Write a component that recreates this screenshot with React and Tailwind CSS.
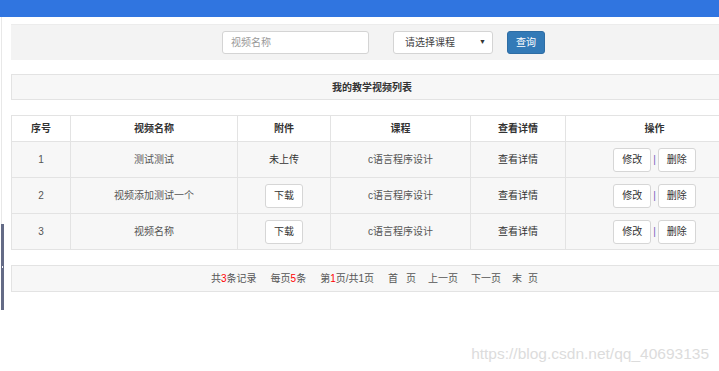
import React from "react";

const rows = [
    { id: 1, name: "测试测试", file: null, course: "c语言程序设计" },
    { id: 2, name: "视频添加测试一个", file: "下载", course: "c语言程序设计" },
    { id: 3, name: "视频名称", file: "下载", course: "c语言程序设计" },
];

const SmallButton = ({ children }) => (
    <button className="w-[38px] h-[24px] bg-white border border-[#d6d6d6] rounded-[3px] text-[10px] text-[#333] leading-none">
        {children}
    </button>
);

const App = () => {
    return (
        <div
            className="relative w-full h-[371px] overflow-hidden bg-white text-[10px] text-[#555]"
            style={{ fontFamily: '"Liberation Sans", "Noto Sans CJK SC", sans-serif' }}
        >
            <div className="h-[17px] bg-[#3075e0]" />
            <div className="flex">
                {/* left collapsed sidebar edge */}
                <div className="w-[4px] flex flex-col shrink-0">
                    <div className="h-[207px] ml-[1px] w-[1px] bg-[#e8e8e8]" />
                    <div className="h-[86px] ml-[1px] w-[3px] bg-[#646b86] flex items-center justify-center">
                        <div className="w-[1px] h-[2px] bg-white" />
                    </div>
                </div>

                <div className="ml-[7px] shrink-0">
                    {/* search bar */}
                    <div className="mt-[7px] w-[722px] h-[36px] bg-[#f3f3f3] border-t border-[#ececec] flex items-center pl-[211px]">
                        <div className="w-[147px] h-[23px] bg-white border border-[#d4d4d4] rounded-[3px] flex items-center px-[8px] text-[#999]">
                            视频名称
                        </div>
                        <div className="ml-[24px] w-[100px] h-[23px] bg-white border border-[#d4d4d4] rounded-[3px] flex items-center justify-between pl-[11px] pr-[6px] text-[#444]">
                            <span>请选择课程</span>
                            <span className="text-[7px] text-[#333]">▼</span>
                        </div>
                        <button className="ml-[14px] w-[38px] h-[23px] bg-[#337ab7] border border-[#2e6da4] rounded-[3px] text-white text-[10px] leading-none">
                            查询
                        </button>
                    </div>

                    {/* title */}
                    <div className="mt-[14px] w-[722px] h-[26px] bg-[#f7f7f7] border border-[#e3e3e3] flex items-center justify-center font-bold text-[#333]">
                        我的教学视频列表
                    </div>

                    {/* table */}
                    <table className="mt-[15px] table-fixed border-collapse w-[732px] text-center">
                        <colgroup>
                            <col className="w-[59px]" />
                            <col className="w-[167px]" />
                            <col className="w-[93px]" />
                            <col className="w-[140px]" />
                            <col className="w-[95px]" />
                            <col className="w-[178px]" />
                        </colgroup>
                        <thead>
                            <tr className="h-[26px] bg-white font-bold text-[#333]">
                                <th className="border border-[#e3e3e3]">序号</th>
                                <th className="border border-[#e3e3e3]">视频名称</th>
                                <th className="border border-[#e3e3e3]">附件</th>
                                <th className="border border-[#e3e3e3]">课程</th>
                                <th className="border border-[#e3e3e3]">查看详情</th>
                                <th className="border border-[#e3e3e3]">操作</th>
                            </tr>
                        </thead>
                        <tbody>
                            {rows.map((row) => (
                                <tr key={row.id} className="h-[36px] bg-[#f7f7f7]">
                                    <td className="border border-[#e3e3e3]">{row.id}</td>
                                    <td className="border border-[#e3e3e3]">{row.name}</td>
                                    <td className="border border-[#e3e3e3] text-[#333]">
                                        {row.file ? <SmallButton>{row.file}</SmallButton> : "未上传"}
                                    </td>
                                    <td className="border border-[#e3e3e3]">{row.course}</td>
                                    <td className="border border-[#e3e3e3] text-[#333]">查看详情</td>
                                    <td className="border border-[#e3e3e3]">
                                        <div className="flex items-center justify-center">
                                            <SmallButton>修改</SmallButton>
                                            <span className="mx-[2px] text-[#7a5fc0]">|</span>
                                            <SmallButton>删除</SmallButton>
                                        </div>
                                    </td>
                                </tr>
                            ))}
                        </tbody>
                    </table>

                    {/* pagination */}
                    <div className="mt-[15px] w-[722px] h-[27px] bg-[#f7f7f7] border border-[#e3e3e3] flex items-center pl-[199px] text-[#555]">
                        <span>共<span className="text-[#f00]">3</span>条记录</span>
                        <span className="ml-[14px]">每页<span className="text-[#f00]">5</span>条</span>
                        <span className="ml-[14px]">第<span className="text-[#f00]">1</span>页/共1页</span>
                        <span className="ml-[14px]">首</span>
                        <span className="ml-[8px]">页</span>
                        <span className="ml-[12px]">上一页</span>
                        <span className="ml-[13px]">下一页</span>
                        <span className="ml-[11px]">末</span>
                        <span className="ml-[6px]">页</span>
                    </div>
                </div>
            </div>

            <div className="absolute right-[10px] bottom-[10px] text-[15.5px] text-[#dcdcdc] leading-none">
                https://blog.csdn.net/qq_40693135
            </div>
        </div>
    );
};

export default App;
